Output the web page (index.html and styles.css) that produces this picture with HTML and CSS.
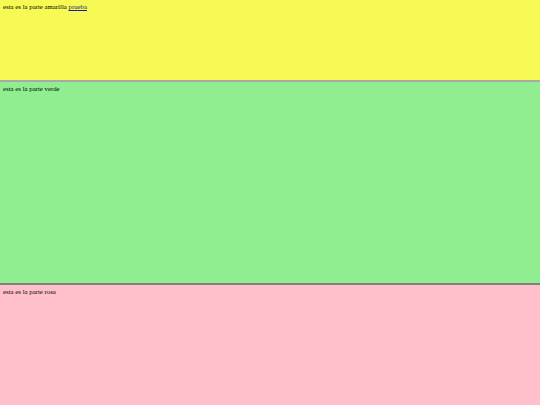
FILE: index.html
```html
<!DOCTYPE html>
<html>
<head>
<meta charset="utf-8">
<link rel="stylesheet" href="styles.css">
</head>
<body>
<div class="page">
  <section class="part yellow">esta es la parte amarilla <a href="#">prueba</a></section>
  <section class="part green">esta es la parte verde</section>
  <section class="part pink">esta es la parte rosa</section>
</div>
</body>
</html>
```
FILE: styles.css
```css
html, body {
  margin: 0;
  padding: 0;
  height: 100%;
}
body {
  font-family: "Liberation Serif", "Times New Roman", serif;
  font-size: 6.8px;
  color: #000;
}
.page {
  display: flex;
  flex-direction: column;
  height: 405px;
}
.part {
  padding: 3px 3px;
  box-sizing: border-box;
  line-height: 1.15;
}
.yellow {
  background: #f7f955;
  height: 80px;
}
.green {
  background: #90ee90;
  height: 203px;
  border-top: 2px solid #a9a9a9;
}
.pink {
  background: #ffc0cb;
  flex: 1;
  border-top: 2px solid #808080;
}
a {
  color: #1a1a8e;
}
```
